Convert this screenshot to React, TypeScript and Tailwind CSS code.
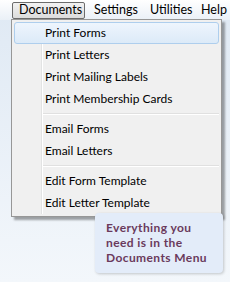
import React from 'react';

interface MenuEntry {
  label: string;
  active?: boolean;
}

const groups: MenuEntry[][] = [
  [
    { label: 'Print Forms', active: true },
    { label: 'Print Letters' },
    { label: 'Print Mailing Labels' },
    { label: 'Print Membership Cards' },
  ],
  [{ label: 'Email Forms' }, { label: 'Email Letters' }],
  [{ label: 'Edit Form Template' }, { label: 'Edit Letter Template' }],
];

const App: React.FC = () => {
  return (
    <div
      className="relative w-[230px] h-[282px] overflow-hidden bg-linear-to-b from-[#dfe9f4] to-[#f3f7fb] text-black"
      style={{ fontFamily: 'Lato, "Noto Sans", sans-serif' }}
    >
      {/* menu bar */}
      <div className="flex items-center h-[20px] bg-linear-to-b from-[#ffffff] to-[#eaf0f7] pl-[12px] text-[12.5px] leading-none whitespace-nowrap">
        <div className="flex items-center w-[73px] h-[17px] pl-[6px] border border-[#6c6c6c] rounded-[2px] bg-linear-to-b from-[#f2f2f2] to-[#dcdcdc]">
          Documents
        </div>
        <span className="ml-[9px] w-[56px]">Settings</span>
        <span className="w-[51px]">Utilities</span>
        <span>Help</span>
      </div>

      {/* dropdown */}
      <div className="absolute left-[11px] top-[19px] w-[211px] border border-[#979797] bg-[#f0f0f0] py-[2px] shadow-[3px_3px_2px_rgba(0,0,0,0.35)]">
        <div className="absolute left-[29px] top-[2px] bottom-[2px] w-[2px] border-l border-[#e2e3e3] bg-white" />
        {groups.map((group, gi) => (
          <div key={gi}>
            {gi > 0 && (
              <div className="ml-[31px] mr-[2px] my-[3px] h-[2px] border-t border-[#e0e0e0] bg-white" />
            )}
            {group.map((item) => (
              <div
                key={item.label}
                className={`relative flex items-center h-[22px] mx-[2px] pl-[30px] text-[12px] rounded-[3px] border ${
                  item.active
                    ? 'border-[#aeceed] bg-linear-to-b from-[#eef5fd] to-[#dceaf8]'
                    : 'border-transparent'
                }`}
              >
                {item.label}
              </div>
            ))}
          </div>
        ))}
      </div>

      {/* tooltip */}
      <div className="absolute left-[95px] top-[213px] w-[128px] h-[60px] rounded-[4px] bg-[#e3ecf9] pl-[11px] pt-[7px] text-[12px] leading-[15px] font-bold tracking-[0.4px] text-[#6a3a5c] shadow-[1px_1px_3px_rgba(0,0,0,0.2)]">
        Everything you
        <br />
        need is in the
        <br />
        Documents Menu
      </div>
    </div>
  );
};

export default App;
